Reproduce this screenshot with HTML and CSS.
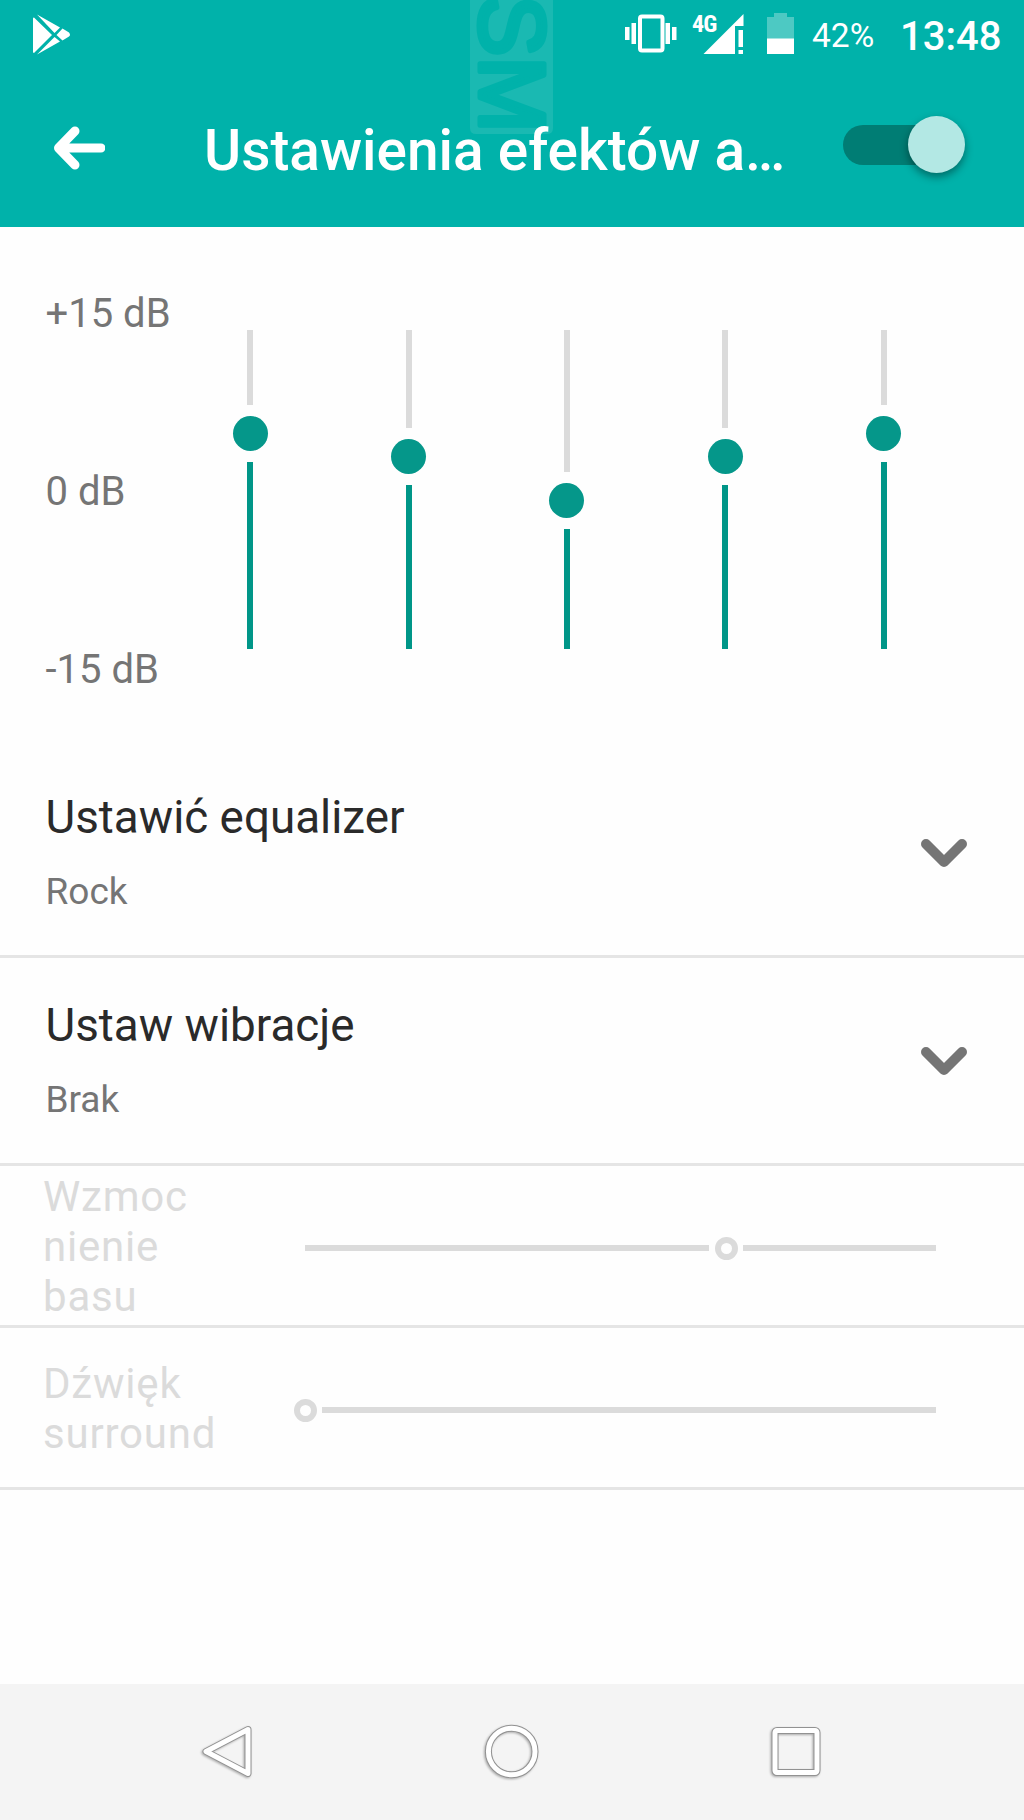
FILE: index.html
```html
<!DOCTYPE html>
<html lang="pl">
<head>
<meta charset="UTF-8">
<meta name="viewport" content="width=device-width, initial-scale=1.0">
<title>Ustawienia efektów audio</title>
<link rel="stylesheet" href="styles.css">
</head>
<body>
<header class="header">
    <svg class="watermark" width="83" height="134" viewBox="0 0 83 134">
        <path class="watermark-box" d="M0 0H83V128Q83 134 77 134H6Q0 134 0 128Z"/>
        <text class="watermark-text" transform="translate(10 -5) rotate(90)">SM</text>
    </svg>
    <div class="status-bar">
        <svg class="play-icon" width="38" height="42" viewBox="0 0 38 42">
            <path d="M1 3.5L19 21L1 39Q0 39 0 37.500V4.500Q0 3.500 1 3.500ZM4 0.500L27 13.500L21.500 19ZM4 40.500L27 27.500L21.500 23ZM29.500 14.500L36 18.500Q38 21 36 22.500L29.500 26.500L23.500 21Z"/>
        </svg>
        <svg class="vibrate-icon" width="52" height="40" viewBox="0 0 52 40">
            <rect x="15" y="2.500" width="22.500" height="34" rx="2" fill="none" stroke="#fff" stroke-width="4"/>
            <path d="M0 13h4.500v13H0zM6.500 9H11v21H6.500zM40.500 9H45v21h-4.500zM47 13h4.500v13H47z"/>
        </svg>
        <span class="network">4G</span>
        <svg class="signal-icon" width="41" height="41" viewBox="0 0 41 41">
            <path d="M40.500 0V12H32V40H0.500ZM35.500 16h4.500v17h-4.500zM35.500 36h4.500v4h-4.500z"/>
        </svg>
        <svg class="battery-icon" width="27" height="41" viewBox="0 0 27 41">
            <path d="M0 4H7V0H20V4H27V26H0Z" opacity="0.3"/>
            <path d="M0 25.500H27V41H0Z"/>
        </svg>
        <span class="percent">42%</span>
        <span class="clock">13:48</span>
    </div>
    <div class="toolbar">
        <svg class="back-icon" width="52" height="44" viewBox="0 0 52 44">
            <path d="M22 5L5.500 22L22 39M6 22H48"/>
        </svg>
        <h1>Ustawienia efektów a…</h1>
        <div class="switch"><div class="switch-thumb"></div></div>
    </div>
</header>

<section class="equalizer">
    <div class="scale">
        <span>+15 dB</span>
        <span>0 dB</span>
        <span>-15 dB</span>
    </div>
    <div class="bands">
        <div class="band"><div class="rest" style="height: 75px"></div><div class="thumb"></div><div class="level"></div></div>
        <div class="band"><div class="rest" style="height: 97.500px"></div><div class="thumb"></div><div class="level"></div></div>
        <div class="band"><div class="rest" style="height: 142px"></div><div class="thumb"></div><div class="level"></div></div>
        <div class="band"><div class="rest" style="height: 97.500px"></div><div class="thumb"></div><div class="level"></div></div>
        <div class="band"><div class="rest" style="height: 75px"></div><div class="thumb"></div><div class="level"></div></div>
    </div>
</section>

<div class="option">
    <div>
        <div class="option-title">Ustawić equalizer</div>
        <div class="option-value">Rock</div>
    </div>
    <svg class="chevron" width="46" height="30" viewBox="0 0 46 30"><path d="M5 5L23 23L41 5"/></svg>
</div>
<div class="option">
    <div>
        <div class="option-title">Ustaw wibracje</div>
        <div class="option-value">Brak</div>
    </div>
    <svg class="chevron" width="46" height="30" viewBox="0 0 46 30"><path d="M5 5L23 23L41 5"/></svg>
</div>

<!-- Disabled effects -->
<div class="effect">
    <div class="effect-name">Wzmoc<br>nienie<br>basu</div>
    <div class="track">
        <div class="line" style="width: 404px"></div>
        <div class="ring"></div>
        <div class="line line-rest"></div>
    </div>
</div>
<div class="effect">
    <div class="effect-name">Dźwięk<br>surround</div>
    <div class="track">
        <div class="line" style="width: 0"></div>
        <div class="ring ring-start"></div>
        <div class="line line-rest"></div>
    </div>
</div>

<nav class="nav-bar">
    <svg width="60" height="60" viewBox="0 0 60 60">
        <path class="edge" d="M50 7.500L8 29.500L50 51.500Z"/>
        <path class="body" d="M50 7.500L8 29.500L50 51.500Z"/>
    </svg>
    <svg width="60" height="60" viewBox="0 0 60 60">
        <circle class="edge" cx="29.700" cy="29.500" r="23.300"/>
        <circle class="body" cx="29.700" cy="29.500" r="23.300"/>
    </svg>
    <svg width="60" height="60" viewBox="0 0 60 60">
        <rect class="edge" x="9" y="8.500" width="42" height="42" rx="2"/>
        <rect class="body" x="9" y="8.500" width="42" height="42" rx="2"/>
    </svg>
</nav>
</body>
</html>
```
FILE: styles.css
```css
* {
    box-sizing: border-box;
}
body {
    font-family: Roboto, sans-serif;
    margin: 0;
    height: 1820px;
    display: flex;
    flex-direction: column;
    background: #fefefe;
}
svg {
    display: block;
    flex: none;
}
.header {
    position: relative;
    height: 227px;
    background: #00b2aa;
    color: #fff;
    fill: #fff;
}
.watermark {
    position: absolute;
    left: 470px;
    top: 0;
}
.watermark-box {
    fill: #1ab9b2;
}
.watermark-text {
    font: 92px "Liberation Sans", sans-serif;
    fill: #00b2aa;
    stroke: #00b2aa;
    stroke-width: 5;
    stroke-linejoin: round;
}
.status-bar {
    position: relative;
    display: flex;
    height: 70px;
    padding: 14px 26px 0 33px;
}
.vibrate-icon {
    margin: 0 0 0 auto;
}
.network {
    width: 25px;
    margin-left: 15px;
    font: bold 24px/24px "Roboto Condensed", Roboto, sans-serif;
    letter-spacing: -1px;
    margin-top: -2px;
}
.signal-icon {
    margin: 0 0 0 -14px;
}
.battery-icon {
    margin: -1px 0 0 23px;
}
.percent {
    width: 62px;
    margin-left: 18px;
    font-size: 33.500px;
    line-height: 44px;
}
.clock {
    width: 98px;
    margin-left: 26px;
    font-size: 40px;
    font-weight: 500;
    line-height: 45px;
    white-space: nowrap;
}
.toolbar {
    position: relative;
    display: flex;
    align-items: center;
    height: 157px;
    padding: 0 65px 0 53px;
}
.back-icon {
    margin-top: -2px;
    fill: none;
    stroke: #fff;
    stroke-width: 9;
    stroke-linecap: round;
    stroke-linejoin: round;
}
h1 {
    margin: 4px 0 0 99px;
    font-size: 56.800px;
    font-weight: 500;
    line-height: 68px;
    white-space: nowrap;
}
.switch {
    position: relative;
    width: 116px;
    height: 40px;
    margin: -8px 0 0 auto;
    border-radius: 20px;
    background: #007d74;
}
.switch-thumb {
    position: absolute;
    right: -6px;
    top: -9px;
    width: 57px;
    height: 57px;
    border-radius: 50%;
    background: #b3e8e4;
    box-shadow: 0 4px 8px rgba(0, 0, 0, 0.4);
}
.equalizer {
    display: flex;
    height: 523px;
}
.scale {
    display: flex;
    flex-direction: column;
    width: 171px;
    padding: 58px 0 0 45.500px;
    gap: 121px;
    color: #757575;
    font-size: 40px;
    line-height: 57px;
    white-space: nowrap;
}
.bands {
    display: grid;
    grid-template-columns: repeat(5, 158.400px);
    height: 318.500px;
    margin-top: 103px;
}
.band {
    display: flex;
    flex-direction: column;
    align-items: center;
}
.rest {
    width: 6px;
    background: #dbdbdb;
}
.thumb {
    width: 35px;
    height: 35px;
    margin: 11px 0;
    border-radius: 50%;
    background: #05978a;
}
.level {
    flex: 1;
    width: 6px;
    background: #009688;
}
.option {
    display: flex;
    justify-content: space-between;
    height: 208px;
    padding: 41px 57px 0 45.500px;
    border-bottom: 3px solid #e5e5e5;
}
.option-title {
    color: #2a2a2a;
    font-size: 45.800px;
    line-height: 54px;
}
.option-value {
    margin-top: 24px;
    color: #757575;
    font-size: 37px;
    line-height: 46px;
}
.chevron {
    margin-top: 48px;
    fill: none;
    stroke: #757575;
    stroke-width: 10;
    stroke-linecap: round;
    stroke-linejoin: round;
}
.effect {
    display: flex;
    align-items: center;
    height: 162px;
    padding: 3px 88px 0 43px;
    border-bottom: 3px solid #e5e5e5;
    color: #dbdbdb;
}
.effect-name {
    width: 262px;
    font-size: 42px;
    line-height: 50px;
    letter-spacing: 0.8px;
}
.track {
    display: flex;
    align-items: center;
    flex: 1;
    margin-top: 2px;
}
.line {
    height: 6px;
    background: #dbdbdb;
}
.line-rest {
    flex: 1;
}
.ring {
    width: 23px;
    height: 23px;
    margin: 0 5px 0 6px;
    border: 6px solid #dbdbdb;
    border-radius: 50%;
}
.ring-start {
    margin-left: -11px;
}
.nav-bar {
    display: flex;
    justify-content: center;
    gap: 224px;
    height: 136px;
    margin-top: auto;
    padding-top: 38px;
    background: #f4f4f4;
}
.edge, .body {
    fill: none;
    stroke-linejoin: round;
}
.edge {
    stroke: #929292;
    stroke-width: 7;
    filter: drop-shadow(-1px 1px 1px rgba(0, 0, 0, 0.3));
}
.body {
    stroke: #fff;
    stroke-width: 5;
}
```
